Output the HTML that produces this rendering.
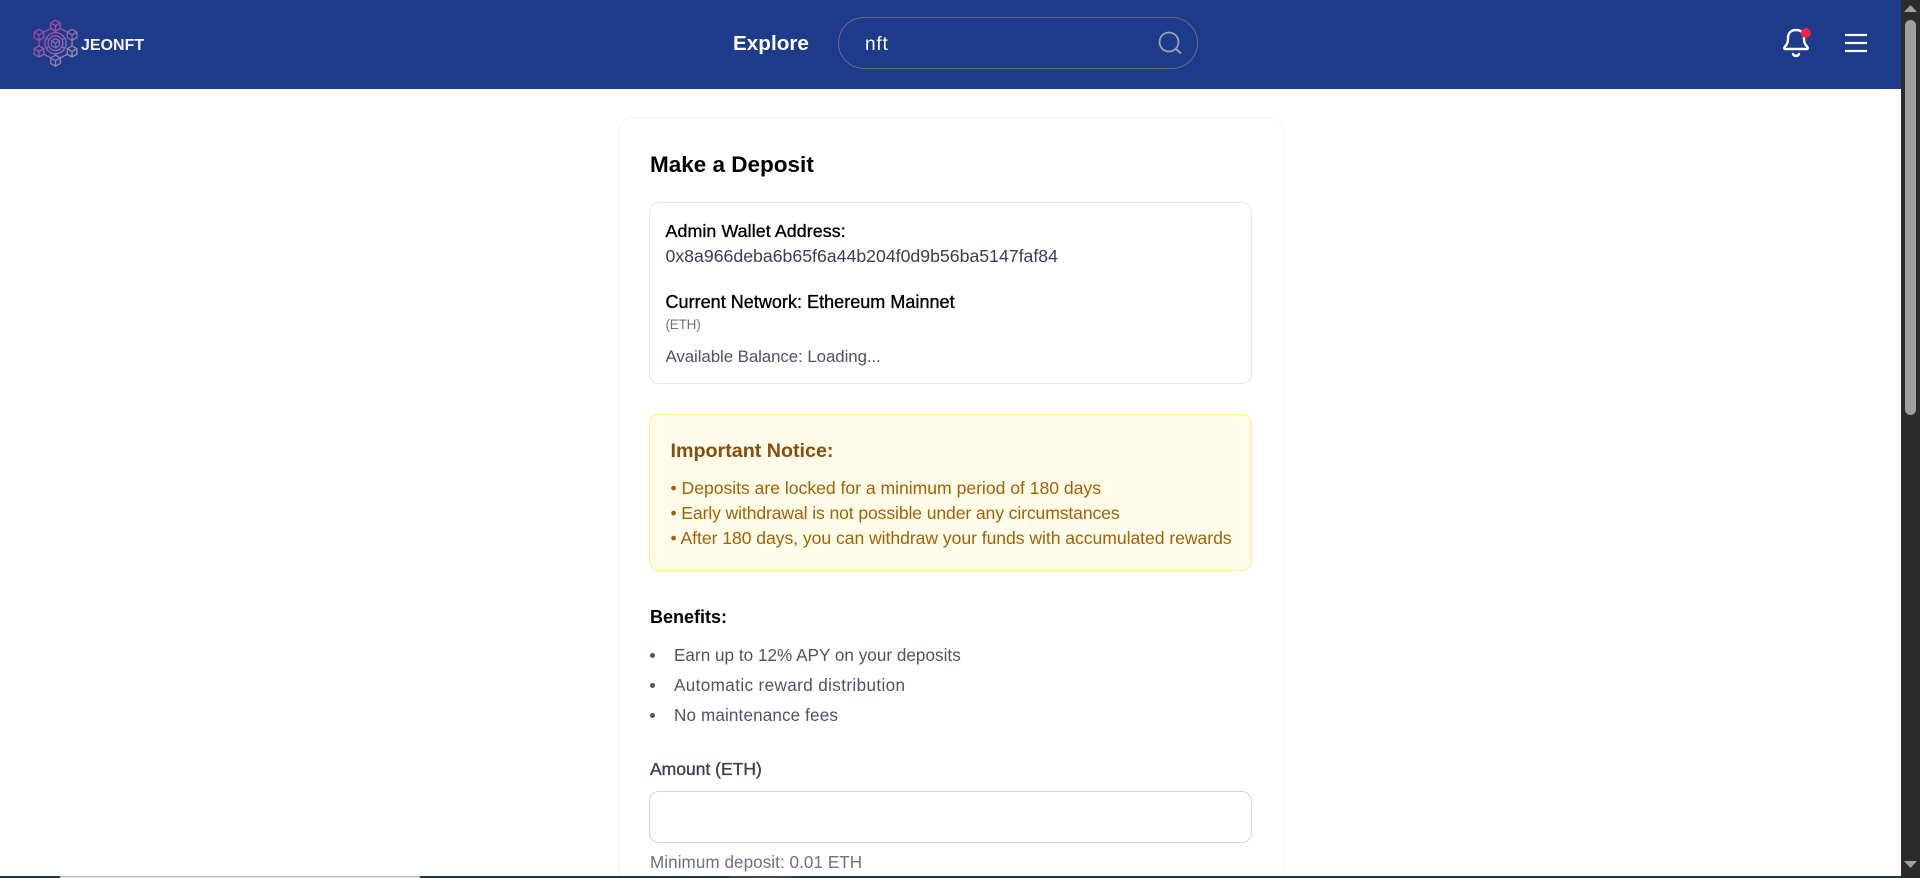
<!DOCTYPE html>
<html lang="en">
<head>
<meta charset="utf-8">
<title>JEONFT - Make a Deposit</title>
<style>
*{box-sizing:border-box;margin:0;padding:0}
html,body{width:1920px;height:878px;overflow:hidden;background:#fff;font-family:"Liberation Sans",Arial,sans-serif}
header{position:absolute;left:0;top:0;width:1901px;height:89px;background:#1e3a8a}
main{position:absolute;left:0;top:0;width:1901px;height:878px;overflow:hidden}
.t{position:absolute;line-height:1;white-space:nowrap;font-weight:400;list-style:none}
.s{-webkit-text-stroke:.35px currentColor}
.b{font-weight:700}
.box{position:absolute}
#card{left:619px;top:117px;width:664px;height:800px;border:1px solid #f3f4f6;border-radius:12px;box-shadow:0 1px 3px rgba(0,0,0,.03)}
#wallet{left:649px;top:202px;width:603px;height:182px;border:1px solid #e5e7eb;border-radius:10px}
#notice{left:649px;top:414px;width:603px;height:157px;background:#fefce8;border:1px solid #fef08a;border-radius:10px}
#amount{left:649px;top:791px;width:603px;height:52px;border:1px solid #d1d5db;border-radius:10px;background:#fff;outline:0}
#search{left:838px;top:17px;width:360px;height:52px;border:1px solid #666c80;border-radius:26px}
.dot{position:absolute;left:650px;width:5px;height:5px;border-radius:50%;background:#4b5563}
#sb{position:absolute;left:1901px;top:0;width:19px;height:878px;background:#2b2b2b}
#thumb{position:absolute;left:4px;top:20px;width:11px;height:395px;border-radius:6px;background:#9f9f9f}
#strip{position:absolute;left:0;top:876px;width:1901px;height:2px;background:#1f3a44}
#strip i{position:absolute;left:60px;top:0;width:360px;height:2px;background:#e5e5e5;border-top:1px solid #bbb}
#strip b{position:absolute;left:730px;top:0;width:63px;height:2px;background:#3a4653}
</style>
</head>
<body>
<main>
<section id="card" class="box"></section>
<h1 class="t b" style="left:650px;top:154px;font-size:22.500px;color:#000">Make a Deposit</h1>

<div id="wallet" class="box"></div>
<p class="t s" style="left:665.500px;top:222.900px;font-size:17.800px;letter-spacing:.1px;color:#000">Admin Wallet Address:</p>
<p class="t" style="left:665.500px;top:248px;font-size:17.700px;color:#374151">0x8a966deba6b65f6a44b204f0d9b56ba5147faf84</p>
<p class="t s" style="left:665.500px;top:292.800px;font-size:18px;letter-spacing:.03px;color:#000">Current Network: Ethereum Mainnet</p>
<p class="t" style="left:665.500px;top:317.600px;font-size:13.500px;letter-spacing:-.2px;color:#6b7280">(ETH)</p>
<p class="t" style="left:665.500px;top:348.700px;font-size:16.900px;letter-spacing:-.08px;color:#4b5563">Available Balance: Loading...</p>

<div id="notice" class="box"></div>
<h2 class="t b" style="left:670.500px;top:442px;font-size:19.700px;color:#854d0e">Important Notice:</h2>
<p class="t" style="left:670.500px;top:480.100px;font-size:17.600px;letter-spacing:-.02px;color:#a16207">• Deposits are locked for a minimum period of 180 days</p>
<p class="t" style="left:670.500px;top:505.100px;font-size:17.600px;letter-spacing:-.12px;color:#a16207">• Early withdrawal is not possible under any circumstances</p>
<p class="t" style="left:670.500px;top:530.100px;font-size:17.600px;letter-spacing:-.05px;color:#a16207">• After 180 days, you can withdraw your funds with accumulated rewards</p>

<h3 class="t b" style="left:650px;top:608px;font-size:18px;color:#000">Benefits:</h3>
<span class="dot" style="top:652.500px"></span>
<span class="dot" style="top:682.500px"></span>
<span class="dot" style="top:712.500px"></span>
<ul>
<li class="t" style="left:674px;top:646.500px;font-size:17.100px;letter-spacing:.03px;color:#4b5563">Earn up to 12% APY on your deposits</li>
<li class="t" style="left:674px;top:676.500px;font-size:17.100px;letter-spacing:.38px;color:#4b5563">Automatic reward distribution</li>
<li class="t" style="left:674px;top:706.500px;font-size:17.100px;letter-spacing:.13px;color:#4b5563">No maintenance fees</li>
</ul>

<label class="t s" style="left:650px;top:761.200px;font-size:17.500px;color:#374151">Amount (ETH)</label>
<input id="amount" class="box" type="text" aria-label="Amount (ETH)">
<p class="t" style="left:650px;top:853.500px;font-size:17.100px;letter-spacing:.05px;color:#6b7280">Minimum deposit: 0.01 ETH</p>
</main>

<header>
<svg width="100" height="89" style="position:absolute;left:0;top:0;filter:blur(.35px)" viewBox="0 0 100 89" fill="none">
<defs><linearGradient id="g" gradientUnits="userSpaceOnUse" x1="34" y1="22" x2="78" y2="66"><stop offset="0" stop-color="#a8389e"/><stop offset=".55" stop-color="#8f65a6"/><stop offset="1" stop-color="#a4a4b0"/></linearGradient></defs>
<g transform="translate(55.500 43.200) scale(.92) translate(-55 -43)" stroke="url(#g)" stroke-width="1.500" stroke-linejoin="round">
<path d="M55 18l5.200 3v6l-5.200 3l-5.200-3v-6zM49.800 21l5.200 3l5.200-3M55 24v6"/>
<path d="M73 28l5.200 3v6l-5.200 3l-5.200-3v-6zM67.800 31l5.200 3l5.200-3M73 34v6"/>
<path d="M73 46l5.200 3v6l-5.200 3l-5.200-3v-6zM67.800 49l5.200 3l5.200-3M73 52v6"/>
<path d="M55 56l5.200 3v6l-5.200 3l-5.200-3v-6zM49.800 59l5.200 3l5.200-3M55 62v6"/>
<path d="M37 46l5.200 3v6l-5.200 3l-5.200-3v-6zM31.800 49l5.200 3l5.200-3M37 52v6"/>
<path d="M37 28l5.200 3v6l-5.200 3l-5.200-3v-6zM31.800 31l5.200 3l5.200-3M37 34v6"/>
<path d="M60 27l8 4M73 40v6M68 55l-8 4M50 59l-8-4M37 46v-6M42 31l8-4M55 30v2M55 54v2M65 37l-2 2M65 49l-2-2M45 37l2 2M45 49l2-2"/>
<circle cx="55" cy="43" r="11.500"/><circle cx="55" cy="43" r="8"/>
<path d="M55 38l4.300 2.500v5l-4.300 2.500l-4.300-2.500v-5zM50.700 40.500l4.300 2.500l4.300-2.500M55 43v5"/>
</g>
</svg>
<div class="t b" style="left:81px;top:38.200px;font-size:16px;color:#f3f4fa">JEONFT</div>
<nav class="t b" style="left:733px;top:34.300px;font-size:20.700px;color:#fff">Explore</nav>
<div id="search" class="box"></div>
<div class="t" style="left:865px;top:35px;font-size:19px;letter-spacing:.8px;color:#fff">nft</div>
<svg width="1920" height="89" style="position:absolute;left:0;top:0" viewBox="0 0 1920 89" fill="none">
<circle cx="1169" cy="42" r="9.500" stroke="#9ca3af" stroke-width="1.800"/>
<path d="M1176 49l4.500 4" stroke="#9ca3af" stroke-width="2" stroke-linecap="round"/>
<path d="M1785 49H1807C1808 49 1808 47.500 1807 46.500C1804.500 44 1804 42 1804 38C1804 33 1801 30 1796 30C1791 30 1788 33 1788 38C1788 42 1787.500 44 1785 46.500C1784 47.500 1784 49 1785 49Z" stroke="#fff" stroke-width="2.400" stroke-linejoin="round"/>
<path d="M1793 54C1794 56.500 1798 56.500 1799 54" stroke="#fff" stroke-width="2.400" stroke-linecap="round"/>
<circle cx="1806" cy="33" r="5" fill="#f5213f"/>
<path d="M1845 35h22M1845 43h22M1845 51h22" stroke="#fff" stroke-width="2.200"/>
</svg>
</header>

<div id="strip"><i></i><b></b></div>
<div id="sb">
<div id="thumb"></div>
<svg width="19" height="878" style="position:absolute;left:0;top:0" viewBox="0 0 19 878"><path d="M9.500 5L16 12H3zM9.500 868L16 861H3z" fill="#a0a0a0"/></svg>
</div>
</body>
</html>
